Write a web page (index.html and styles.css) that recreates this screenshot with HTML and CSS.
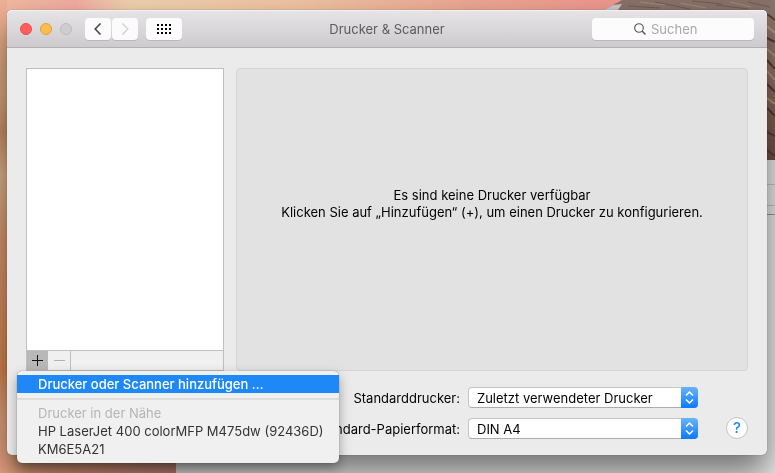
FILE: index.html
```
<!DOCTYPE html>
<html lang="de">
<head>
  <meta charset="UTF-8">
  <meta name="viewport" content="width=device-width, initial-scale=1.0">
  <title>Drucker &amp; Scanner</title>
  <link rel="stylesheet" href="styles.css">
</head>
<body>

  <svg class="desktop" viewBox="0 0 775 473" preserveAspectRatio="none" aria-hidden="true">
    <defs>
      <linearGradient id="sky" x1="0" y1="0" x2="1" y2="0">
        <stop offset="0" stop-color="#f0b8a0"/>
        <stop offset="0.09" stop-color="#f2aca0"/>
        <stop offset="0.16" stop-color="#efd0ae"/>
        <stop offset="0.38" stop-color="#efc3a2"/>
        <stop offset="0.6" stop-color="#eba693"/>
        <stop offset="0.8" stop-color="#ee968c"/>
      </linearGradient>
      <linearGradient id="edge" x1="0" y1="0" x2="0" y2="1">
        <stop offset="0" stop-color="#efb096"/>
        <stop offset="0.1" stop-color="#e6ad88"/>
        <stop offset="0.2" stop-color="#d8a880"/>
        <stop offset="0.28" stop-color="#cb9069"/>
        <stop offset="0.37" stop-color="#dcb48e"/>
        <stop offset="0.5" stop-color="#d89870"/>
        <stop offset="0.78" stop-color="#d68450"/>
        <stop offset="0.88" stop-color="#e0a27c"/>
        <stop offset="1" stop-color="#eba382"/>
      </linearGradient>
      <linearGradient id="ground" x1="0" y1="0" x2="1" y2="0">
        <stop offset="0" stop-color="#e8a47c"/>
        <stop offset="0.4" stop-color="#d99476"/>
        <stop offset="1" stop-color="#c28676"/>
      </linearGradient>
      <linearGradient id="rock" x1="0" y1="0" x2="0" y2="1">
        <stop offset="0" stop-color="#857268"/>
        <stop offset="0.4" stop-color="#947567"/>
        <stop offset="1" stop-color="#704b43"/>
      </linearGradient>
    </defs>
    <rect width="775" height="473" fill="url(#edge)"/>
    <rect x="7" width="768" height="60" fill="url(#sky)"/>
    <rect x="8" y="440" width="168" height="33" fill="url(#ground)"/>
    <path d="M604 10 L622 0 H775 V165 H760 V10 Z" fill="url(#rock)"/>
    <path d="M604 10 L613 5 L622 4 L618 10 Z" fill="#c9c5c9"/>
    <path d="M628 6 L660 8 M655 2 L690 9 M692 1 L722 4 M716 5 L748 9 M748 2 L770 7" stroke="#6e5a51" fill="none"/>
    <path d="M640 2 L665 5 M680 3 L706 8 M730 2 L751 7" stroke="#a08a7b" fill="none"/>
    <path d="M767 14 L775 20 M767 38 L775 42 M767 60 L775 69 M767 84 L775 92 M767 108 L775 116 M767 132 L775 136 M767 150 L775 156" stroke="#5a3a34" stroke-width="2"/>
    <path d="M767 26 L775 33 M767 49 L775 56 M767 71 L775 80 M767 98 L775 104" stroke="#b8927f" stroke-width="2"/>
    <rect x="176" y="160" width="599" height="313" fill="#e8e8e8"/>
    <path d="M767 184.500 H775 M767 205.500 H775" stroke="#c4c4c4"/>
    <path d="M767 214.500 H775" stroke="#9a9a9a"/>
  </svg>

  <main class="window">
    <header class="titlebar">
      <div class="tools">
        <div class="lights">
          <button class="light close" aria-label="Schließen"></button>
          <button class="light minimize" aria-label="Minimieren"></button>
          <button class="light zoom" aria-label="Zoomen" disabled></button>
        </div>
        <div class="nav">
          <button class="tool" aria-label="Zurück">
            <svg width="8" height="12" viewBox="0 0 8 12"><path d="M6.500 0.500 L1.200 6 L6.500 11.500" fill="none" stroke="#484848" stroke-width="1.600"/></svg>
          </button>
          <button class="tool" aria-label="Vor" disabled>
            <svg width="8" height="12" viewBox="0 0 8 12"><path d="M1.500 0.500 L6.800 6 L1.500 11.500" fill="none" stroke="#d2d2d2" stroke-width="1.400"/></svg>
          </button>
        </div>
        <button class="tool all" aria-label="Alle einblenden">
          <svg width="14" height="10" viewBox="0 0 14 10" shape-rendering="crispEdges">
            <path d="M0 1 H14 M0 5 H14 M0 9 H14" stroke="#000" stroke-width="2" stroke-dasharray="2 2"/>
          </svg>
        </button>
      </div>
      <h1>Drucker &amp; Scanner</h1>
      <label class="search">
        <svg width="12" height="12" viewBox="0 0 12 12"><circle cx="5" cy="5" r="4.300" fill="none" stroke="#555" stroke-width="1.100"/><path d="M8 8 L11.500 11.500" stroke="#555" stroke-width="1.400"/></svg>
        <input type="search" placeholder="Suchen" aria-label="Suchen">
      </label>
    </header>

    <div class="content">
      <section class="printers">
        <div class="list"></div>
        <div class="listbar">
          <button class="add" aria-label="Hinzufügen">
            <svg width="11" height="11" viewBox="0 0 11 11" shape-rendering="crispEdges"><path d="M0 5.500 H11 M5.500 0 V11" stroke="#111"/></svg>
          </button>
          <button class="remove" aria-label="Entfernen" disabled>
            <svg width="11" height="11" viewBox="0 0 11 11" shape-rendering="crispEdges"><path d="M0 5.500 H11" stroke="#b0b0b0"/></svg>
          </button>
          <div class="menu" role="menu">
            <button class="item active" role="menuitem">Drucker oder Scanner hinzufügen …</button>
            <hr>
            <div class="item heading">Drucker in der Nähe</div>
            <button class="item" role="menuitem">HP LaserJet 400 colorMFP M475dw (92436D)</button>
            <button class="item" role="menuitem">KM6E5A21</button>
          </div>
        </div>
      </section>

      <section class="details">
        <p>Es sind keine Drucker verfügbar<br>Klicken Sie auf „Hinzufügen“ (+), um einen Drucker zu konfigurieren.</p>
      </section>
    </div>

    <footer class="settings">
      <div class="fields">
        <label for="drucker">Standarddrucker:</label>
        <div class="popup">
          <select id="drucker"><option>Zuletzt verwendeter Drucker</option></select>
          <svg width="17" height="21" viewBox="0 0 17 21"><path d="M5 8.500 L8.500 5 L12 8.500 M5 12.500 L8.500 16 L12 12.500" fill="none" stroke="#fff" stroke-width="1.500"/></svg>
        </div>
        <label for="papier">Standard-Papierformat:</label>
        <div class="popup">
          <select id="papier"><option>DIN A4</option></select>
          <svg width="17" height="21" viewBox="0 0 17 21"><path d="M5 8.500 L8.500 5 L12 8.500 M5 12.500 L8.500 16 L12 12.500" fill="none" stroke="#fff" stroke-width="1.500"/></svg>
        </div>
      </div>
      <button class="help" aria-label="Hilfe">?</button>
    </footer>
  </main>

</body>
</html>
```
FILE: styles.css
```
:root {
  --blau: #1e88f7;
  --fenster: #ebebeb;
  --rahmen: #bfbfbf;
}

* {
  box-sizing: border-box;
}

body {
  margin: 0;
  padding: 10px 8px 18px 7px;
  background: #d99476;
  font-family: Inter, "Liberation Sans", Arial, sans-serif;
  font-size: 13px;
  line-height: 18px;
  color: #000;
}

button, input, select {
  margin: 0;
  padding: 0;
  border: 0;
  font: inherit;
  color: inherit;
}

svg {
  display: block;
}

.desktop {
  position: fixed;
  top: 0;
  left: 0;
  width: 100%;
  height: 100%;
}

.window {
  position: relative;
  border-radius: 5px;
  background: var(--fenster);
  box-shadow: 0 0 1px rgba(0, 0, 0, 0.6), 0 18px 32px rgba(0, 0, 0, 0.5);
}

/* title bar */

.titlebar {
  display: grid;
  grid-template-columns: 1fr auto 1fr;
  align-items: center;
  height: 38px;
  padding: 0 13px;
  border-bottom: 1px solid #b2b0b2;
  border-radius: 5px 5px 0 0;
  background: linear-gradient(#e6e4e6, #cdcbcd);
  box-shadow: inset 0 1px 0 #f3f2f3;
}

.titlebar h1 {
  margin: 0;
  font-size: 13px;
  font-weight: normal;
  color: #5c5c5c;
}

.tools, .lights, .nav {
  display: flex;
  align-items: center;
}

.lights {
  gap: 8px;
  margin-right: 13px;
}

.light {
  width: 12px;
  height: 12px;
  border: 1px solid #bcbcbc;
  border-radius: 50%;
  background: #cfcecf;
}

.close {
  border-color: #e84d4a;
  background: #fc5f5c;
}

.minimize {
  border-color: #e0a03c;
  background: #fdbb50;
}

.nav {
  gap: 1px;
  margin-right: 8px;
}

.tool {
  display: flex;
  align-items: center;
  justify-content: center;
  width: 26px;
  height: 22px;
  border-radius: 4px;
  background: #fbfbfb;
  box-shadow: 0 1px 0 #b9b8b9;
}

.all {
  width: 36px;
}

.search {
  display: flex;
  align-items: center;
  justify-self: end;
  gap: 5px;
  width: 162px;
  height: 22px;
  padding-left: 42px;
  border-radius: 4px;
  background: #fcfcfc;
  box-shadow: 0 1px 0 #b9b8b9;
}

.search input {
  width: 100px;
  background: none;
  outline: none;
}

.search input::placeholder {
  color: #a9a9a9;
}

/* printer list and details */

.content {
  display: flex;
  gap: 12px;
  padding: 20px 19px 0;
}

.printers {
  display: flex;
  flex-direction: column;
  flex: none;
  width: 198px;
  border: 1px solid var(--rahmen);
}

.list {
  flex: 1;
  background: #fff;
}

.listbar {
  position: relative;
  display: flex;
  height: 20px;
  border-top: 1px solid var(--rahmen);
  background: #f0f0f0;
}

.add, .remove {
  display: flex;
  align-items: center;
  justify-content: center;
  width: 22px;
  background: none;
}

.add {
  width: 21px;
  background: #b8b8b8;
}

.remove {
  width: 23px;
  border-right: 1px solid var(--rahmen);
}

.details {
  display: flex;
  align-items: center;
  justify-content: center;
  flex: 1;
  min-height: 303px;
  padding-bottom: 32px;
  border: 1px solid #d5d5d5;
  border-radius: 4px;
  background: #e2e2e2;
  text-align: center;
}

.details p {
  margin: 0;
  line-height: 17px;
}

/* menu */

.menu {
  position: absolute;
  top: 20px;
  left: -10px;
  z-index: 1;
  width: 322px;
  padding: 4px 0 5px;
  border-radius: 5px;
  background: #f0f0f0;
  box-shadow: 0 0 1px rgba(0, 0, 0, 0.5), 0 5px 12px rgba(0, 0, 0, 0.35);
}

.item {
  display: block;
  width: 100%;
  height: 18px;
  padding-left: 21px;
  background: none;
  color: #333;
  line-height: 18px;
  text-align: left;
  white-space: nowrap;
}

.active {
  background: var(--blau);
  color: #fff;
  font-weight: 500;
}

.heading {
  color: #b5b5b5;
}

.menu hr {
  height: 2px;
  margin: 5px 0 4px;
  border: 0;
  background: #dedede;
}

/* default printer and paper size */

.settings {
  display: flex;
  align-items: flex-end;
  gap: 28px;
  padding: 16px 19px;
}

.fields {
  display: grid;
  grid-template-columns: 1fr 230px;
  align-items: center;
  flex: 1;
  gap: 10px 8px;
}

.fields label {
  text-align: right;
}

.popup {
  position: relative;
  height: 21px;
}

.popup select {
  appearance: none;
  width: 100%;
  height: 21px;
  padding: 0 24px 0 8px;
  border: 1px solid #c6c6c6;
  border-bottom-color: #adadad;
  border-radius: 4px;
  background: #fff;
}

.popup svg {
  position: absolute;
  top: 0;
  right: 0;
  border-radius: 0 4px 4px 0;
  background: linear-gradient(#6bb3fa, #0a7aff);
  pointer-events: none;
}

.help {
  width: 22px;
  height: 22px;
  border: 1px solid #c4c4c4;
  border-radius: 50%;
  background: #fff;
  color: var(--blau);
  font-size: 15px;
  font-weight: 500;
  line-height: 20px;
}
```
